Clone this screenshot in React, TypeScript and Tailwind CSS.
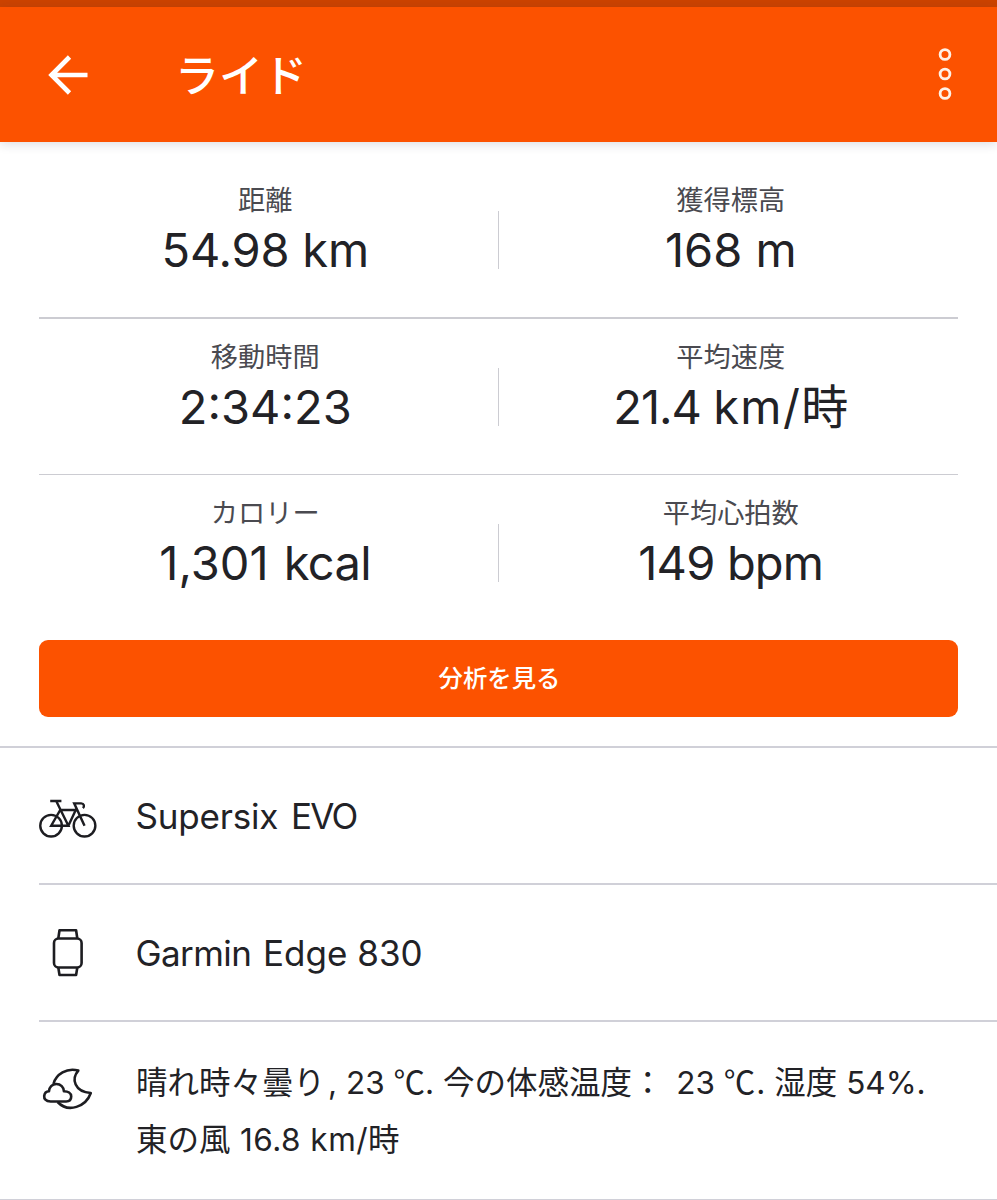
import type { ReactNode } from "react";

type Stat = {
  label: string;
  value: ReactNode;
};

const statRows: Stat[][] = [
  [
    { label: "距離", value: <span className="tracking-[-0.2px]">54.98 km</span> },
    { label: "獲得標高", value: "168 m" },
  ],
  [
    { label: "移動時間", value: "2:34:23" },
    {
      label: "平均速度",
      value: (
        <>
          <span className="tracking-[-1px]">21.4 </span>
          <span className="tracking-[1.4px]">km/</span>時
        </>
      ),
    },
  ],
  [
    {
      label: "カロリー",
      value: (
        <>
          1,301 <span className="ml-[2px] tracking-[-0.6px]">kcal</span>
        </>
      ),
    },
    { label: "平均心拍数", value: <span className="tracking-[-0.8px]">149 bpm</span> },
  ],
];

function StatCell({ stat }: { stat: Stat }) {
  return (
    <div className="flex flex-1 flex-col items-center whitespace-nowrap">
      <p className="mt-[19px] h-[39px] text-[27.2px] leading-10 text-[#4a4a50]">{stat.label}</p>
      <p className="h-[60px] text-[47px] leading-[60px] text-[#222226]">{stat.value}</p>
    </div>
  );
}

function BikeIcon() {
  return (
    <svg width="60" height="48" viewBox="0 -6.5 60 48" fill="none" stroke="#1d1d21" strokeWidth="2.5">
      <circle cx="12.5" cy="27.5" r="11.2" />
      <circle cx="47.1" cy="27.5" r="11.2" />
      <path d="M11.6 2h11.6M17.8 2L30.4 27.5H12.6L22 11.3H38M30.4 27.5L38.6 10M47.1 27.5L36.4 4.4h7.2c3 0 3.8 3 1.8 5" />
    </svg>
  );
}

function WatchIcon() {
  return (
    <svg width="32" height="50" viewBox="0 0 32 50" fill="none" stroke="#1d1d21" strokeWidth="2.6" strokeLinejoin="round">
      <rect x="2" y="10.5" width="27.6" height="29" rx="4.5" />
      <path d="M6.3 10.5L7.5 2.2h16.6l1.2 8.3M6.3 39.5l1.2 7.5h16.6l1.2-7.5" />
    </svg>
  );
}

function WeatherIcon() {
  return (
    <svg width="52" height="46" viewBox="0 0 52 46" fill="none" stroke="#1d1d21" strokeWidth="2.6" strokeLinejoin="round">
      <path d="M11.5 17.8C14.1 8.5 24.7 1.3 36.3 4.6C29 13 32.5 26 48.8 27C44 40.5 26.5 47.5 15.6 36" />
      <path d="M8.6 35.5C3.5 35.5 2 32.5 2.2 30C2.5 27.2 4.5 25.4 7 25.3C7 21.1 10.3 18 14.4 18C18.6 18 21.9 21.1 21.9 25.3C26 25.3 29.2 27.1 29.2 30.6C29.2 33.8 27.1 35.5 24.1 35.5Z" />
    </svg>
  );
}

function Celsius() {
  return <span className="font-['Noto_Sans_CJK_JP']">℃</span>;
}

function DetailRow({ icon, children }: { icon: ReactNode; children: ReactNode }) {
  return (
    <div className="ml-[39px] flex h-[137px] items-center border-b-2 border-[#d0d0d8]">
      <div className="flex w-[58px] justify-center">{icon}</div>
      <p className="mt-[1px] ml-[38.5px] text-[35px] leading-none whitespace-nowrap">{children}</p>
    </div>
  );
}

export default function App() {
  return (
    <div className="h-[1200px] w-[997px] overflow-hidden bg-white font-['Inter','Noto_Sans_CJK_JP',sans-serif] text-[#222226]">
      {/* Status bar edge */}
      <div className="h-[7px] bg-[#cc4300]" />

      {/* App bar */}
      <header className="flex h-[135px] items-center bg-[#fc5200] text-white shadow-[0_2px_10px_rgba(40,40,70,0.16)]">
        <svg className="ml-[48px]" width="40" height="40" viewBox="0 0 40 40" fill="none" stroke="white" strokeWidth="4.6">
          <path d="M21.5 2L3.5 20L21.5 38M3.5 20H39.5" />
        </svg>
        <h1 className="mt-[3px] ml-[87px] text-[44px] leading-none font-medium">ライド</h1>
        <svg className="mr-[45px] mb-[2px] ml-auto" width="14" height="54" viewBox="0 0 14 54" fill="none" stroke="#fff1e6" strokeWidth="2.8">
          <circle cx="7" cy="7.5" r="4.9" />
          <circle cx="7" cy="27" r="4.9" />
          <circle cx="7" cy="46.5" r="4.9" />
        </svg>
      </header>

      {/* Ride stats */}
      <section className="pt-5">
        {statRows.map((row, i) => (
          <div key={row[0].label}>
            <div className="flex h-[155px] pr-[34px] pl-[33px]">
              <StatCell stat={row[0]} />
              <div className="mt-[49px] h-[58px] w-px bg-[#ccccd2]" />
              <StatCell stat={row[1]} />
            </div>
            {i < statRows.length - 1 && <div className="mx-[39px] h-[1.5px] bg-[#ccccd2]" />}
          </div>
        ))}
      </section>

      <button className="mx-[39px] mt-[10px] flex h-[77px] w-[919px] items-center justify-center rounded-[9px] bg-[#fc5200] pl-[2px] text-[24.4px] font-medium text-white">
        分析を見る
      </button>

      {/* Gear and weather */}
      <section className="mt-[29px] border-t-2 border-[#d0d0d8]">
        <DetailRow icon={<BikeIcon />}>
          <span className="tracking-[-0.2px]">Supersix</span> <span className="ml-[3px] tracking-[-1.8px]">EVO</span>
        </DetailRow>
        <DetailRow icon={<WatchIcon />}>
          <span className="tracking-[-0.6px]">Garmin</span> <span className="ml-[2px]">Edge 830</span>
        </DetailRow>
        <div className="flex h-[178px] border-b border-[#d0d0d8] pl-[39px]">
          <div className="mt-[44px] flex w-[58px] justify-center">
            <WeatherIcon />
          </div>
          <div className="mt-[30px] ml-[39px] text-[31.5px] leading-[57px] whitespace-pre">
            <p>
              晴れ時々曇り<span className="ml-[3px]">, 23 </span>
              <Celsius />. 今の体感温度：<span className="ml-[4px]"> 23 </span>
              <Celsius />
              <span className="ml-[1px]">. </span>湿度<span> 54%.</span>
            </p>
            <p>
              東の風<span className="tracking-[0.5px]"> 16.8 km/</span>時
            </p>
          </div>
        </div>
      </section>
    </div>
  );
}
